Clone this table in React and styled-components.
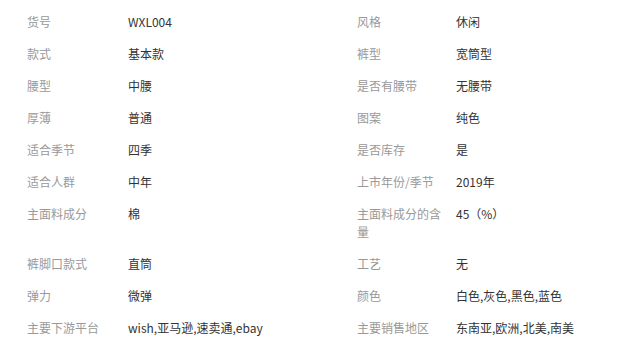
import React from 'react'
import styled, { createGlobalStyle } from 'styled-components'

const GlobalStyle = createGlobalStyle`
  html, body {
    margin: 0;
    padding: 0;
    background: #fff;
  }
  body {
    font-family: "Microsoft YaHei", "Noto Sans CJK SC", "Noto Sans", sans-serif;
    font-size: 12px;
  }
`;

const Sheet = styled.div`
  padding: 6px 0 0 27px;
  width: 621px;
  box-sizing: border-box;
`;

const Row = styled.div`
  display: grid;
  grid-template-columns: 101px 229px 99px 1fr;
  align-items: start;
`;

const Cell = styled.div`
  padding: 7px 10px 7px 0;
  line-height: 18px;
  color: ${p => (p.label ? '#999' : '#333')};
  word-break: break-all;
`;

const specs = [
  ['货号', 'WXL004', '风格', '休闲'],
  ['款式', '基本款', '裤型', '宽筒型'],
  ['腰型', '中腰', '是否有腰带', '无腰带'],
  ['厚薄', '普通', '图案', '纯色'],
  ['适合季节', '四季', '是否库存', '是'],
  ['适合人群', '中年', '上市年份/季节', '2019年'],
  ['主面料成分', '棉', '主面料成分的含量', '45（%）'],
  ['裤脚口款式', '直筒', '工艺', '无'],
  ['弹力', '微弹', '颜色', '白色,灰色,黑色,蓝色'],
  ['主要下游平台', 'wish,亚马逊,速卖通,ebay', '主要销售地区', '东南亚,欧洲,北美,南美'],
];

export default function App() {
  return (
    <>
      <GlobalStyle />
      <Sheet>
        {specs.map(([k1, v1, k2, v2]) => (
          <Row key={k1}>
            <Cell label>{k1}</Cell>
            <Cell>{v1}</Cell>
            <Cell label>{k2}</Cell>
            <Cell>{v2}</Cell>
          </Row>
        ))}
      </Sheet>
    </>
  );
}
